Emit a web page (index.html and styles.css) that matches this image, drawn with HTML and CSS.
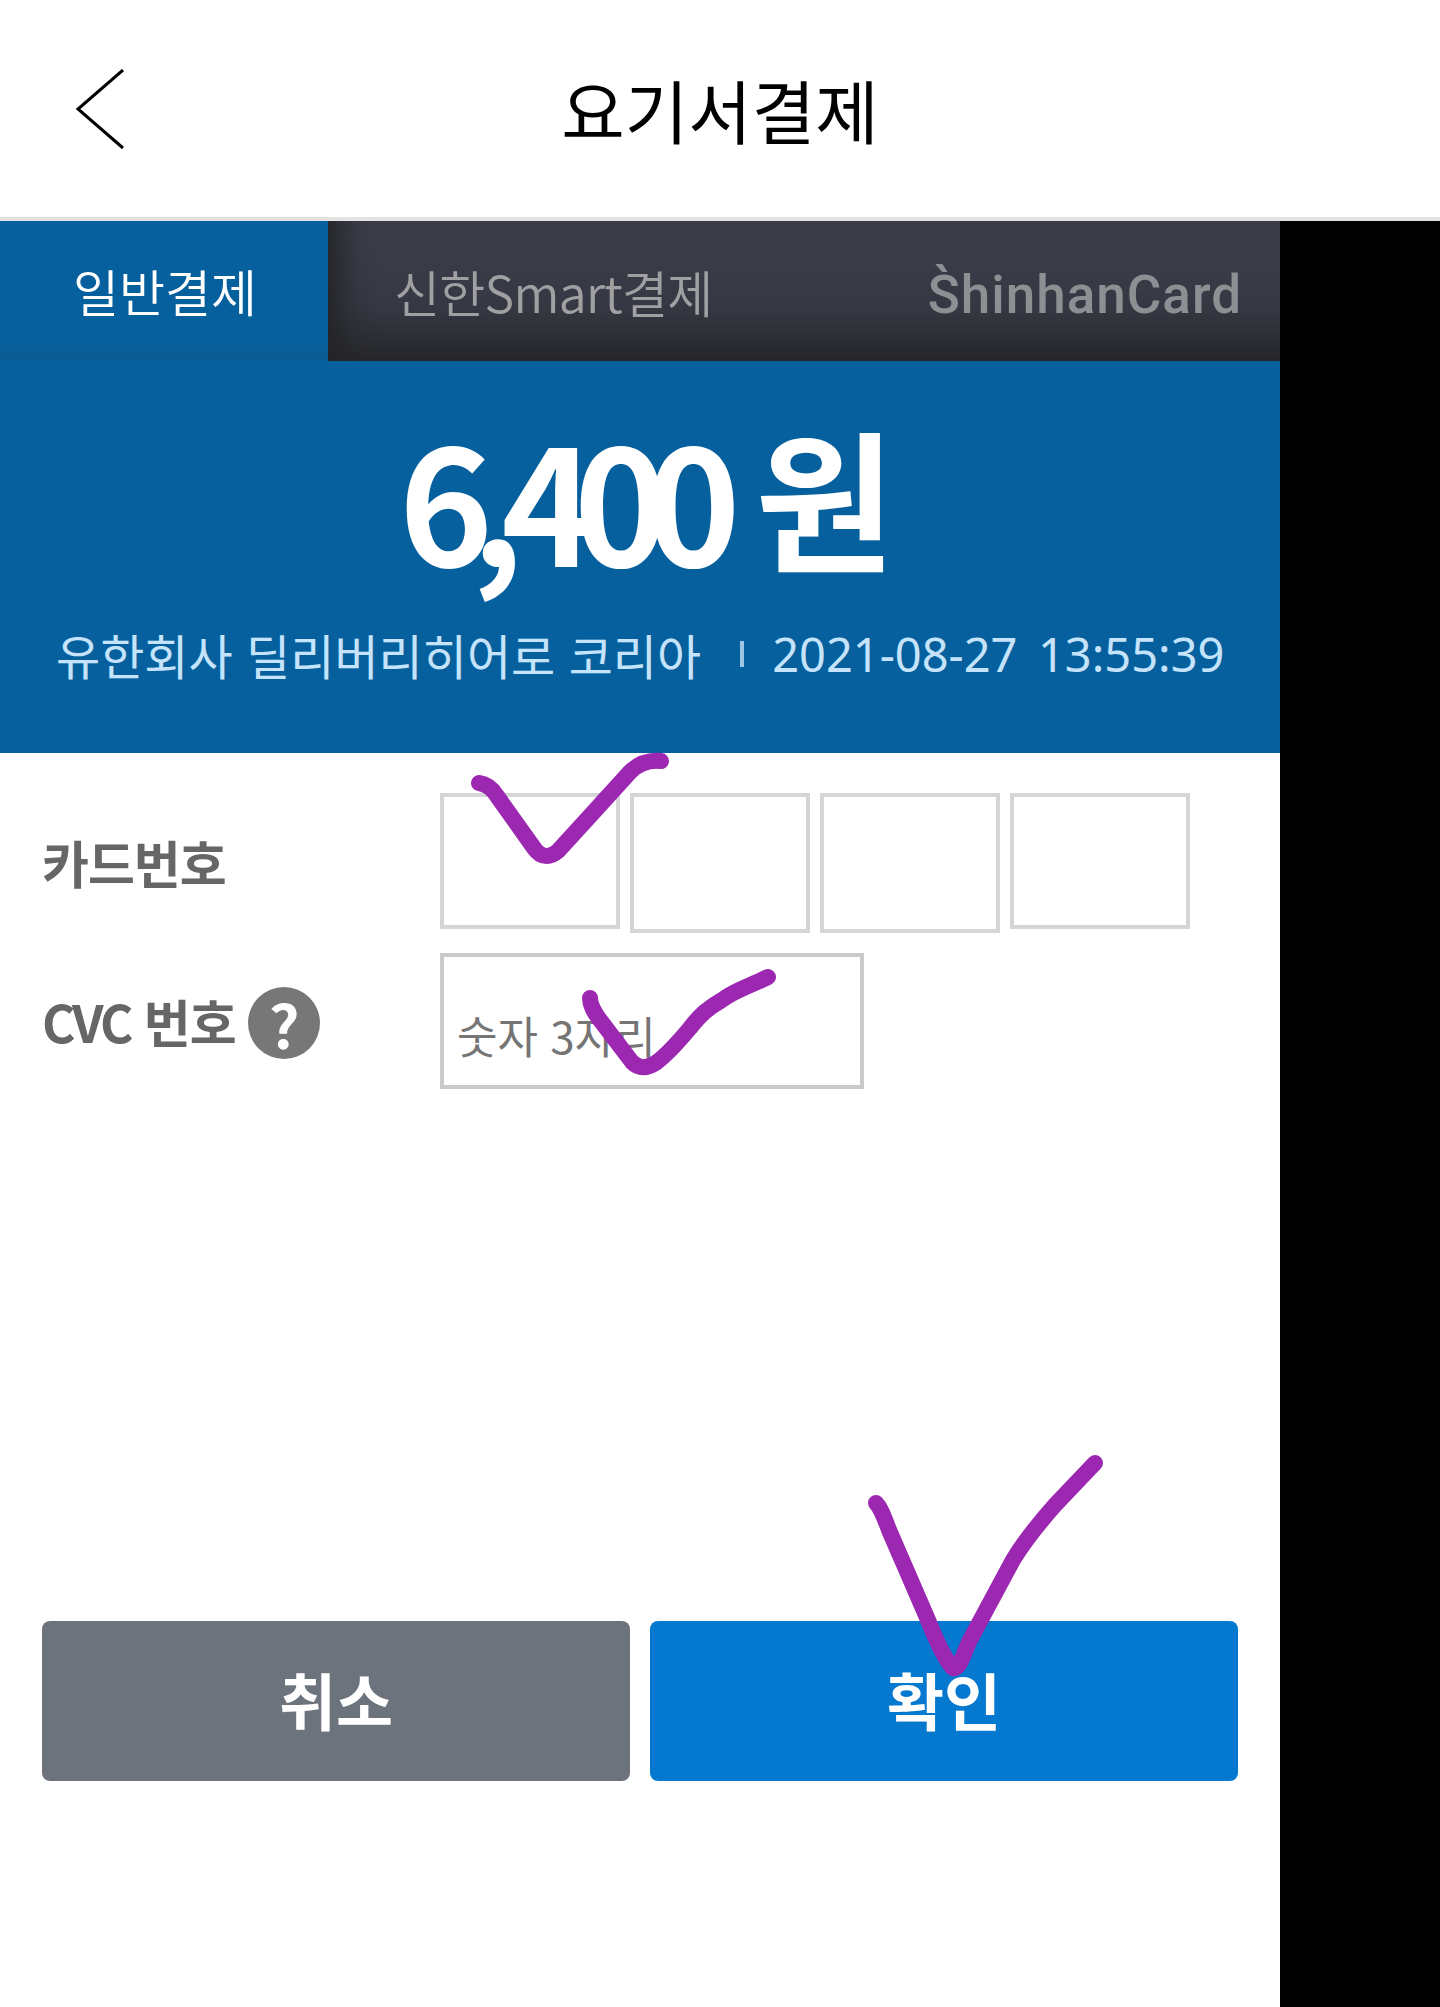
FILE: index.html
```html
<!DOCTYPE html>
<html lang="ko">
<head>
    <meta charset="UTF-8">
    <title>요기서결제</title>
    <link rel="stylesheet" href="styles.css">
</head>
<body>
    <header class="top-bar">
        <svg class="back-icon" width="50" height="82" viewBox="0 0 50 82">
            <path d="M47 1 L2 40 L47 79" fill="none" stroke="#000" stroke-width="3"/>
        </svg>
        <h1 class="page-title">요기서결제</h1>
    </header>

    <main class="app">
        <nav class="tabs">
            <div class="tab-general">일반결제</div>
            <div class="tab-dark">
                <span class="tab-smart">신한Smart결제</span>
                <span class="card-logo">S&#768;hinhanCard</span>
            </div>
        </nav>

        <section class="summary">
            <div class="amount">6,400 <span class="won">원</span></div>
            <div class="merchant-row">
                <span>유한회사 딜리버리히어로 코리아</span>
                <span class="divider"></span>
                <span class="paid-at">2021-08-27 &nbsp;13:55:39</span>
            </div>
        </section>

        <form class="card-form">
            <div class="form-row">
                <label class="form-label card-label">카드번호</label>
                <div class="card-inputs">
                    <input type="text" class="card-input">
                    <input type="text" class="card-input tall">
                    <input type="text" class="card-input tall">
                    <input type="text" class="card-input">
                </div>
            </div>
            <div class="form-row cvc-row">
                <label class="form-label"><span class="cvc-text">CVC</span> 번호<span class="help-badge">?</span></label>
                <input type="text" class="cvc-input" placeholder="숫자 3자리">
            </div>
            <div class="actions">
                <button type="button" class="btn btn-cancel">취소</button>
                <button type="button" class="btn btn-ok">확인</button>
            </div>
        </form>
    </main>

    <!-- hand drawn check marks on top of the screenshot -->
    <svg class="scribbles" width="1440" height="2007" viewBox="0 0 1440 2007">
        <path d="M479 783 C487 784 492 788 497 796 L534 848 C541 858 550 858 558 851 L590 816 L630 772 C640 762 650 760 661 761"/>
        <path d="M590 998 C590 1006 594 1012 600 1020 L632 1062 C640 1070 648 1068 657 1062 C670 1052 680 1040 690 1028 C700 1015 708 1008 722 1000 C735 990 750 986 768 977"/>
        <path d="M876 1503 C881 1508 884 1517 889 1530 L928 1620 C936 1640 945 1660 953 1668 C960 1670 964 1652 970 1640 L1013 1560 C1025 1540 1040 1522 1055 1505 L1095 1463"/>
    </svg>
</body>
</html>
```

FILE: styles.css
```css
* {
    box-sizing: border-box;
}

body {
    margin: 0;
    height: 2007px;
    overflow: hidden;
    position: relative;
    background-color: #000;
    font-family: "Noto Sans CJK KR", "Noto Sans", sans-serif;
}

.top-bar {
    position: relative;
    display: flex;
    justify-content: center;
    align-items: center;
    height: 221px;
    background-color: #fff;
    border-bottom: 4px solid #e3e3e3;
}

.back-icon {
    position: absolute;
    left: 76px;
    top: 69px;
}

.page-title {
    margin: 0;
    font-size: 69px;
    font-weight: 400;
    line-height: 80px;
    color: #000;
}

.app {
    width: 1280px;
    height: 1786px;
    background-color: #fff;
}

/* tabs */
.tabs {
    display: flex;
    height: 140px;
}

.tab-general {
    display: flex;
    justify-content: center;
    align-items: center;
    width: 328px;
    padding: 0 0 2px 2px;
    font-size: 50px;
    font-weight: 350;
    color: #fff;
    background: linear-gradient(#07609e 85%, #0a5a92);
}

.tab-dark {
    flex: 1;
    display: flex;
    justify-content: space-between;
    align-items: center;
    padding: 0 38px 0 66px;
    background: linear-gradient(#3c3f4a, #363943 60%, #26272b);
    box-shadow: inset 34px 0 30px -20px #232427;
}

.tab-smart {
    font-size: 50px;
    font-weight: 350;
    letter-spacing: -0.7px;
    color: #a0a0a2;
}

.card-logo {
    font-family: Roboto, sans-serif;
    font-size: 53px;
    font-weight: 500;
    line-height: 60px;
    letter-spacing: 1px;
    margin-top: 8px;
    color: #8e8f93;
}

/* amount panel */
.summary {
    height: 392px;
    padding-top: 39px;
    background-color: #07609e;
    color: #fff;
}

.amount {
    height: 190px;
    padding-left: 14px;
    font-size: 160px;
    font-weight: 700;
    line-height: 190px;
    letter-spacing: -22px;
    text-align: center;
}

.won {
    font-size: 152px;
    letter-spacing: 0;
    margin-left: 14px;
    vertical-align: 6px;
}

.merchant-row {
    display: flex;
    align-items: center;
    height: 60px;
    margin-top: 34px;
    padding-left: 56px;
    font-size: 48px;
    color: #c5e4fb;
    white-space: pre;
}

.divider {
    width: 4px;
    height: 26px;
    margin: 0 28px 0 39px;
    background-color: #9cc6e6;
}

.paid-at {
    font-family: "Noto Sans", sans-serif;
    font-size: 47px;
    word-spacing: -2px;
}

/* card form */
.card-form {
    padding: 40px 42px 0;
}

.form-row {
    display: flex;
    align-items: center;
}

.cvc-row {
    margin-top: 20px;
}

.form-label {
    display: flex;
    align-items: center;
    width: 398px;
    font-size: 51px;
    font-weight: 700;
    letter-spacing: -1px;
    color: #666;
    white-space: pre;
}

.card-label {
    padding-bottom: 3px;
}

.cvc-text {
    letter-spacing: -3px;
}

.card-inputs {
    display: flex;
    align-items: flex-start;
    gap: 10px;
}

.card-input {
    width: 180px;
    height: 136px;
    border: 4px solid #d5d5d5;
    background-color: #fff;
}

.card-input.tall {
    height: 140px;
}

.cvc-input {
    width: 424px;
    height: 136px;
    padding: 28px 13px 0;
    border: 4px solid #cacaca;
    font-family: inherit;
    font-size: 44px;
    background-color: #fff;
}

.cvc-input::placeholder {
    color: #757575;
    opacity: 1;
}

.help-badge {
    display: inline-flex;
    justify-content: center;
    align-items: center;
    width: 72px;
    height: 72px;
    margin: 4px 0 0 12px;
    border-radius: 50%;
    background-color: #777;
    color: #fff;
    font-size: 60px;
    line-height: 72px;
}

/* buttons */
.actions {
    display: flex;
    gap: 20px;
    margin-top: 532px;
}

.btn {
    flex: 1;
    height: 160px;
    padding-bottom: 6px;
    border: none;
    border-radius: 8px;
    font-family: inherit;
    font-size: 62px;
    font-weight: 700;
    color: #fff;
}

.btn-cancel {
    background-color: #6c737d;
}

.btn-ok {
    background-color: #0578d0;
}

.scribbles {
    position: absolute;
    left: 0;
    top: 0;
    fill: none;
    stroke: #9c27b0;
    stroke-width: 16;
    stroke-linecap: round;
    stroke-linejoin: round;
}
```
